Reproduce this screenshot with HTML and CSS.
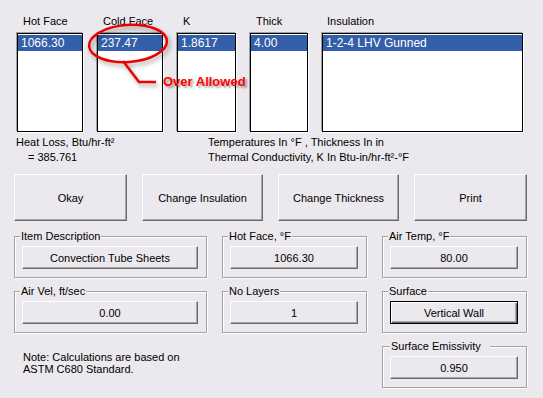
FILE: index.html
```html
<!DOCTYPE html>
<html>

<head>
  <link rel="stylesheet" href="styles.css">
</head>

<body>
  <div class="window">
    <div class="lists">
      <div class="col">
        <div class="col-label">Hot Face</div>
        <div class="listbox"><div class="item selected">1066.30</div></div>
      </div>
      <div class="col">
        <div class="col-label">Cold Face</div>
        <div class="listbox"><div class="item selected">237.47</div></div>
      </div>
      <div class="col">
        <div class="col-label">K</div>
        <div class="listbox"><div class="item selected">1.8617</div></div>
      </div>
      <div class="col">
        <div class="col-label">Thick</div>
        <div class="listbox"><div class="item selected">4.00</div></div>
      </div>
      <div class="col">
        <div class="col-label insul">Insulation</div>
        <div class="listbox"><div class="item selected">1-2-4 LHV Gunned</div></div>
      </div>
    </div>

    <div class="info">
      <div>
        <div>Heat Loss, Btu/hr-ft²</div>
        <div class="indent">= 385.761</div>
      </div>
      <div>
        <div>Temperatures In °F , Thickness In in</div>
        <div>Thermal Conductivity, K In Btu-in/hr-ft²-°F</div>
      </div>
    </div>

    <div class="actions">
      <button class="btn big">Okay</button>
      <button class="btn big">Change Insulation</button>
      <button class="btn big">Change Thickness</button>
      <button class="btn big">Print</button>
    </div>

    <div class="groups">
      <fieldset class="group">
        <legend>Item Description</legend>
        <button class="btn field">Convection Tube Sheets</button>
      </fieldset>
      <fieldset class="group">
        <legend>Hot Face, °F</legend>
        <button class="btn field">1066.30</button>
      </fieldset>
      <fieldset class="group">
        <legend>Air Temp, °F</legend>
        <button class="btn field">80.00</button>
      </fieldset>

      <fieldset class="group">
        <legend>Air Vel, ft/sec</legend>
        <button class="btn field">0.00</button>
      </fieldset>
      <fieldset class="group">
        <legend>No Layers</legend>
        <button class="btn field">1</button>
      </fieldset>
      <fieldset class="group">
        <legend>Surface</legend>
        <button class="btn field default">Vertical Wall</button>
      </fieldset>

      <div class="note">
        Note: Calculations are based on<br>
        ASTM C680 Standard.
      </div>
      <div></div>
      <fieldset class="group">
        <legend class="wide">Surface Emissivity</legend>
        <button class="btn field">0.950</button>
      </fieldset>
    </div>

    <!-- red markup drawn over the screenshot -->
    <svg class="callout" width="260" height="100" viewBox="0 0 260 100">
      <ellipse cx="128" cy="43.5" rx="39" ry="18.5" transform="rotate(-4 128 43.5)" />
      <polyline points="123,61 139,82 156,82" />
    </svg>
    <span class="callout-text">Over Allowed</span>
  </div>
</body>

</html>
```

FILE: styles.css
```css
body {
  margin: 0;
  background: #ebe9ed;
  font-family: "Liberation Sans", Arial, sans-serif;
  font-size: 11px;
  color: #000;
}

.window {
  position: relative;
  width: 543px;
  height: 398px;
  overflow: hidden;
}

/* top list boxes */
.lists {
  display: grid;
  grid-template-columns: 66px 66px 59px 58px 201px;
  column-gap: 14px;
  padding: 14px 0 0 17px;
}

.col-label {
  line-height: 14px;
  padding-left: 6px;
  margin-bottom: 5px;
}

.col-label.insul {
  padding-left: 5px;
}

.listbox {
  height: 97px;
  background: #fff;
  border: 1px solid #000;
  box-shadow: -1px -1px 0 #a0a0a0, 1px 1px 0 #fff;
  padding: 1px 0 0 0;
  box-sizing: content-box;
  height: 96px;
}

.item {
  height: 16px;
  line-height: 16px;
  font-size: 12px;
  padding-left: 3px;
  white-space: nowrap;
  overflow: hidden;
}

.item.selected {
  background: #335ea8;
  color: #fff;
}

/* heat loss / units text */
.info {
  display: grid;
  grid-template-columns: 192px 1fr;
  padding-left: 16px;
  margin-top: 3px;
  line-height: 15px;
}

.indent {
  padding-left: 12px;
}

/* buttons */
.btn {
  font-family: "Liberation Sans", Arial, sans-serif;
  font-size: 11px;
  color: #000;
  background: #ebe9ed;
  border: 1px solid;
  border-color: #fff #6a6a6a #6a6a6a #fff;
  box-shadow: inset -1px -1px 0 #a8a8a8;
  padding: 0;
  margin: 0;
  cursor: default;
}

.btn.default {
  border-color: #000;
  box-shadow: inset 1px 1px 0 #fff, inset -1px -1px 0 #6a6a6a, inset -2px -2px 0 #a8a8a8;
}

.actions {
  display: grid;
  grid-template-columns: 113px 121px 121px 113px;
  column-gap: 15px;
  padding-left: 14px;
  margin-top: 9px;
}

.btn.big {
  height: 47px;
}

/* grouped fields */
.groups {
  display: grid;
  grid-template-columns: 193px 145px 145px;
  column-gap: 15px;
  row-gap: 7px;
  padding-left: 14px;
  margin-top: 9px;
}

.group {
  margin: 0;
  min-width: 0;
  padding: 4px 8px 8px 7px;
  border: 1px solid #a3a3a3;
  box-shadow: inset 1px 1px 0 #fff, 1px 1px 0 #fff;
}

.group legend {
  font-size: 11px;
  line-height: 12px;
  padding: 0 1px;
  margin-left: -2px;
  background: #ebe9ed;
}

.group legend.wide {
  margin-left: 0;
  padding: 0 9px 0 1px;
}

.btn.field {
  display: block;
  width: 100%;
  height: 23px;
}

.note {
  padding: 11px 0 0 9px;
  line-height: 12px;
}

/* annotation */
.callout {
  position: absolute;
  left: 0;
  top: 0;
  pointer-events: none;
  filter: drop-shadow(2px 3px 2px rgba(0, 0, 0, 0.35));
}

.callout ellipse,
.callout polyline {
  fill: none;
  stroke: #ee0000;
  stroke-width: 2.5;
}

.callout-text {
  position: absolute;
  left: 163px;
  top: 74px;
  font-weight: bold;
  font-size: 13px;
  line-height: 16px;
  color: #ff0000;
  text-shadow: 2px 2px 2px rgba(0, 0, 0, 0.35);
  white-space: nowrap;
}
```
